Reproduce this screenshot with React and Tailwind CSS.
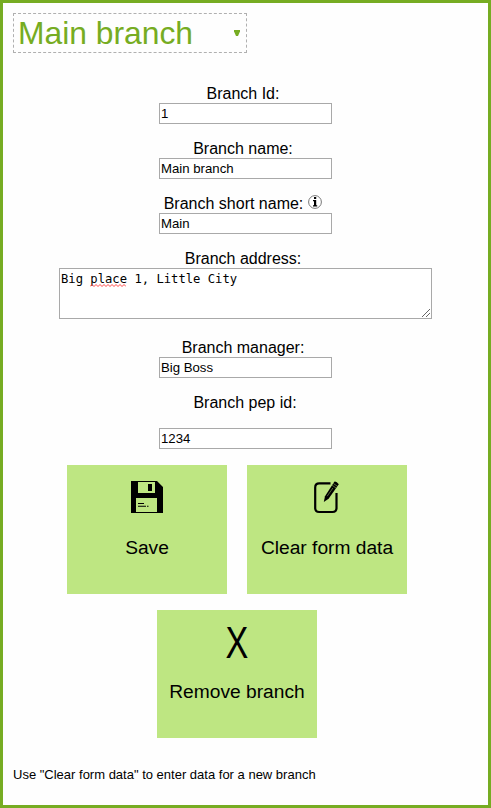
import React from "react";

const inputClass =
  "block h-[21px] w-[173px] shrink-0 border border-[#a9a9a9] bg-white px-px text-[13.2px] leading-[15px] text-black outline-none";

function Field({ label, value, icon, gap = "mr-[5px]" }) {
  return (
    <div className="flex h-[55px] flex-col items-center">
      <label className={"flex h-[19px] shrink-0 items-center text-[16px] leading-[19px] " + gap}>
        {label}
        {icon}
      </label>
      <input className={inputClass} defaultValue={value} spellCheck={false} />
    </div>
  );
}

function InfoIcon() {
  return (
    <svg className="ml-[5px] -mt-[3px]" width="14" height="14" viewBox="0 0 14 14">
      <circle cx="7" cy="7" r="6.4" fill="#fff" stroke="#777" strokeWidth="1" />
      <path d="M5 5h3.2v5.2h1v1.2H5v-1.2h1V6.2H5z" fill="#000" />
      <rect x="6" y="2" width="2.2" height="2" fill="#000" />
    </svg>
  );
}

function SaveIcon() {
  return (
    <svg width="32" height="32" viewBox="0 0 32 32">
      <path
        fillRule="evenodd"
        d="M0 0H26L32 6V32H0zM7 1V12H24V1zM5 17V31H26V17z"
        fill="#000"
      />
      <rect x="17" y="3" width="4" height="7" fill="#000" />
      <path d="M7 22.5h6M7 25.3h8M16 25.3h1.5" stroke="#000" strokeWidth="1.1" />
    </svg>
  );
}

function EditIcon() {
  return (
    <svg width="26" height="33" viewBox="0 0 26 33">
      <path
        d="M16.5 2.4H5.2Q1.2 2.4 1.2 6.4V27Q1.2 31 5.2 31H18.5Q22.5 31 22.5 27V12"
        fill="none"
        stroke="#000"
        strokeWidth="2.2"
      />
      <path d="M9.8 21L11 15.2L20.3 .7Q22.5 .1 24.8 3.3L14.6 17.8z" fill="#000" />
      <path d="M18.1 4.3L22.4 7.2M19.3 2.5L23.6 5.4M13.2 15.2L18.9 7" stroke="#bee682" strokeWidth=".45" />
    </svg>
  );
}

function Tile({ label, children, height = "h-[129px]", labelGap = "mt-[23px]" }) {
  return (
    <button
      className={
        "flex w-[160px] flex-col items-center bg-[#bee682] pt-4 text-[19.2px] leading-[22px] text-black " + height
      }
    >
      <span className="flex h-[33px] items-start justify-center">{children}</span>
      <span className={"whitespace-nowrap " + labelGap}>{label}</span>
    </button>
  );
}

export default function App() {
  return (
    <main className="flex h-[808px] w-[491px] flex-col border-[3px] border-[#76ac22] bg-[#fefefe] p-[10px] font-['Liberation_Sans',Arial,sans-serif] text-black">
      <button className="flex h-10 w-[234px] shrink-0 items-center justify-between border border-dashed border-[#b0b0b0] pl-1 pr-[6px] text-[31.8px] leading-[36px] text-[#76ac22]">
        <span>Main branch</span>
        <svg width="6" height="6" viewBox="0 0 6 6">
          <path d="M0 0H6V1.5L4 6H2L0 1.5z" fill="#76ac22" />
        </svg>
      </button>

      <form className="mt-[31px] flex w-[465px] flex-col items-center">
        <Field label="Branch Id:" value="1" />
        <Field label="Branch name:" value="Main branch" />
        <Field label="Branch short name:" value="Main" icon={<InfoIcon />} />
        <div className="flex h-[89px] flex-col items-center">
          <label className="mr-[5px] h-[19px] text-[16px] leading-[19px]">Branch address:</label>
          <div className="relative h-[51px] w-[373px] border border-[#a9a9a9] bg-white px-px pt-[3px] font-['DejaVu_Sans_Mono',monospace] text-[12.2px] leading-[15px]">
            Big{" "}
            <span className="relative inline-block">
              place
              <svg className="absolute left-0 top-[12px]" width="36" height="3" viewBox="0 0 36 3">
                <path
                  d="M0 2.5l2-2 2 2 2-2 2 2 2-2 2 2 2-2 2 2 2-2 2 2 2-2 2 2 2-2 2 2 2-2 2 2 2-2 2 2"
                  fill="none"
                  stroke="#f33"
                  strokeWidth=".9"
                />
              </svg>
            </span>{" "}
            1, Little City
            <svg className="absolute bottom-px right-px" width="8" height="8" viewBox="0 0 8 8">
              <path d="M0 8l8-8M4 8l4-4" stroke="#555" strokeWidth=".9" />
            </svg>
          </div>
        </div>
        <Field label="Branch manager:" value="Big Boss" />
        <Field label="Branch pep id:" value="1234" gap="mb-4 mr-px" />
      </form>

      <div className="mt-[17px] flex w-[448px] flex-wrap justify-center gap-x-5 gap-y-4">
        <Tile label="Save">
          <SaveIcon />
        </Tile>
        <Tile label="Clear form data">
          <EditIcon />
        </Tile>
        <Tile label="Remove branch" height="h-[128px]" labelGap="mt-[22px]">
          <span className="inline-block scale-x-[0.76] text-[45px] leading-[33px]">X</span>
        </Tile>
      </div>

      <p className="mt-[29px] text-[13px] leading-[15px]">Use "Clear form data" to enter data for a new branch</p>
    </main>
  );
}
